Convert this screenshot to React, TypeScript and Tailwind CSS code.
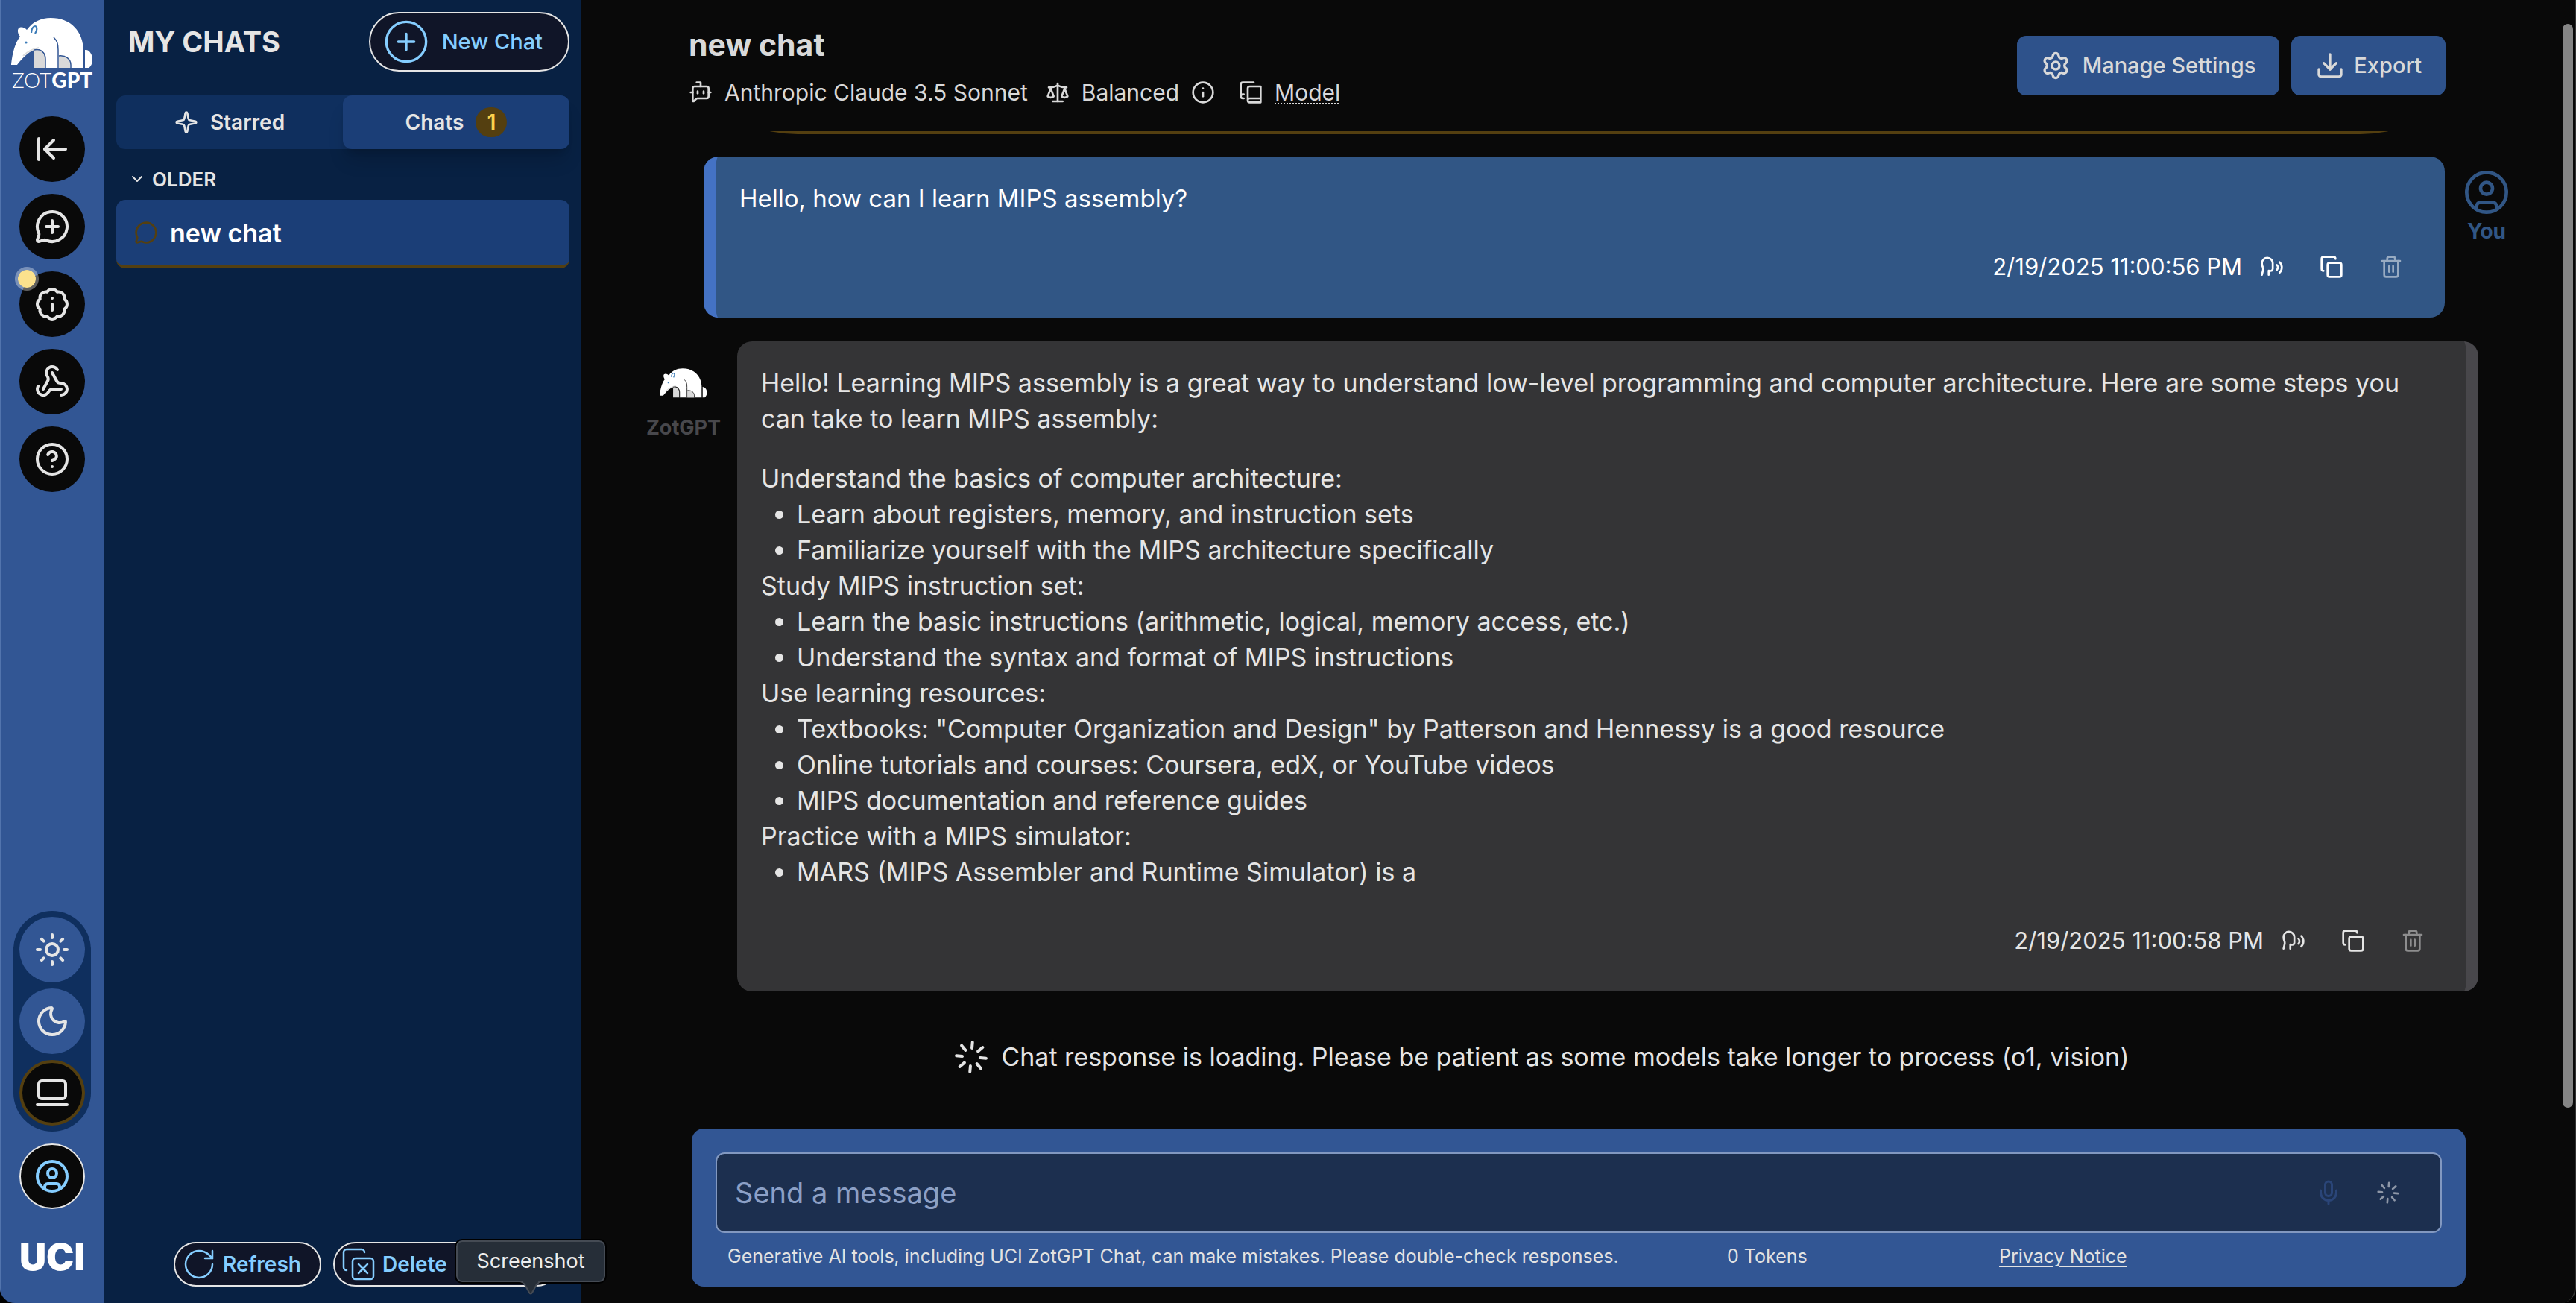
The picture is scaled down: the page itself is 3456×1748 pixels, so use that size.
import React from 'react';
import {
  ArrowLeftToLine,
  BadgeInfo,
  BotMessageSquare,
  ChevronDown,
  CircleHelp,
  CirclePlus,
  CircleUser,
  Copy,
  CopyX,
  Download,
  Info,
  LaptopMinimal,
  Loader,
  MessageCircle,
  MessageCirclePlus,
  Mic,
  Moon,
  RotateCw,
  Scale,
  Settings,
  Sparkle,
  Speech,
  Sun,
  Trash2,
  Webhook,
} from 'lucide-react';

function Anteater({ className, line }: { className: string; line: string }) {
  return (
    <svg viewBox="0 0 110 68" className={className} aria-hidden="true">
      <path d="M101 43c5 1 8 7 8 13 0 5-2 9-5 11h-5V43z" fill="#fff" />
      <path
        d="M0 62C2 46 5 34 12 25c-3-3-4-9-2-11 3-3 8-1 11 2C29 5 40 0 53 0c27 0 44 18 44 45v22H46V55c0-8-5-14-12-13C24 44 15 54 8 63H0z"
        fill="#fff"
      />
      <path d="M31 43c9-2 14 4 14 12v12H31z" fill="#d9d9d9" />
      <path d="M64 51c9-1 15 4 15 12v4H64z" fill="#d9d9d9" />
      <path d="M16 51c6-6 12-9 21-11" fill="none" stroke="#dcdcdc" strokeWidth="2" />
      <path
        d="M57 26c5 5 6 9 6 17v24M64 51c9-1 16 4 16 12v4M31 43c9-2 15 4 15 12v12M98 44v23"
        fill="none"
        stroke={line}
        strokeWidth="1.5"
      />
      <path d="M27 20c0-6 3-9 5-9s4 4 0 10" fill="none" stroke="#3c7cb8" strokeWidth="2.2" />
      <circle cx="20" cy="33" r="1.6" fill="#3c7cb8" />
    </svg>
  );
}

function BookStack({ className }: { className: string }) {
  return (
    <svg
      viewBox="0 0 24 24"
      className={className}
      fill="none"
      stroke="currentColor"
      strokeWidth="2"
      strokeLinecap="round"
      strokeLinejoin="round"
      aria-hidden="true"
    >
      <path d="M2 16V4a2 2 0 0 1 2-2h11" />
      <path d="M5 14H4a2 2 0 1 0 0 4h1" />
      <path d="M22 18H11a2 2 0 1 0 0 4h11V6H11a2 2 0 0 0-2 2v12" />
    </svg>
  );
}

const railItems = [
  { label: 'Collapse menu', Icon: ArrowLeftToLine, dot: false },
  { label: 'Start a new chat', Icon: MessageCirclePlus, dot: false },
  { label: 'What is new', Icon: BadgeInfo, dot: true },
  { label: 'Integrations', Icon: Webhook, dot: false },
  { label: 'Help', Icon: CircleHelp, dot: false },
];

function Rail() {
  return (
    <nav className="flex w-[140px] shrink-0 flex-col items-center border-l-2 border-[#5274ad] bg-[#325694] pr-0.5 text-[#e5e5e5]">
      <a href="#home" className="mt-6 flex flex-col items-center text-white" aria-label="ZotGPT home">
        <Anteater className="h-[68px] w-[110px]" line="#325694" />
        <span className="font-[Lato] text-[28px] leading-[30px] font-light">
          ZOT<span className="font-black">GPT</span>
        </span>
      </a>
      <div className="mt-[34px] flex flex-col gap-4">
        {railItems.map(({ label, Icon, dot }) => (
          <button
            key={label}
            type="button"
            aria-label={label}
            className="relative flex size-[88px] items-center justify-center rounded-full bg-[#090909]"
          >
            <Icon className="size-12" />
            {dot && (
              <span className="absolute -top-1.5 -left-1.5 size-8 rounded-full border-4 border-white/35 bg-[#fbe18d] bg-clip-padding" />
            )}
          </button>
        ))}
      </div>
      <div className="mt-auto flex flex-col gap-2 rounded-full bg-[#0f2f5e] p-2">
        <button type="button" aria-label="Light theme" className="flex size-[88px] items-center justify-center rounded-full bg-[#325694]">
          <Sun className="size-12" />
        </button>
        <button type="button" aria-label="Dark theme" className="flex size-[88px] items-center justify-center rounded-full bg-[#325694]">
          <Moon className="size-12" />
        </button>
        <button
          type="button"
          aria-label="System theme"
          className="flex size-[88px] items-center justify-center rounded-full border-4 border-[#543f10] bg-[#090909]"
        >
          <LaptopMinimal className="size-12" />
        </button>
      </div>
      <button
        type="button"
        aria-label="Account"
        className="mt-4 flex size-[88px] items-center justify-center rounded-full border-2 border-[#e5e5e5] bg-[#090909] text-[#85cdff]"
      >
        <CircleUser className="size-12" />
      </button>
      <span className="mt-[38px] mb-9 font-[Inter] text-[50px] leading-[52px] font-black text-white">UCI</span>
    </nav>
  );
}

function ChatPanel() {
  return (
    <aside className="flex w-[640px] shrink-0 flex-col bg-[#082143] px-4 pt-4 pb-[22px] text-[#e5e5e5]">
      <div className="flex h-20 items-center justify-between pl-4">
        <h1 className="text-[38px] leading-[48px] font-bold">MY CHATS</h1>
        <button
          type="button"
          className="flex h-20 items-center gap-4 rounded-full border-2 border-[#e5e5e5] bg-[#101528] pr-[34px] pl-4 text-[29px] font-medium text-[#85cdff]"
        >
          <CirclePlus className="size-16" strokeWidth={1.25} />
          New Chat
        </button>
      </div>
      <div role="tablist" className="mt-8 grid h-[72px] grid-cols-2 rounded-xl bg-[#0f2f5e] text-[28px] font-semibold">
        <button type="button" role="tab" aria-selected="false" className="flex items-center justify-center gap-4">
          <Sparkle className="size-8" />
          Starred
        </button>
        <button
          type="button"
          role="tab"
          aria-selected="true"
          className="flex items-center justify-center gap-4 rounded-xl bg-[#1b3e77] shadow-xl shadow-black/15"
        >
          Chats
          <span className="flex h-10 w-[42px] items-center justify-center rounded-full bg-[#543f10] text-[#fcd34d]">1</span>
        </button>
      </div>
      <section>
        <button type="button" className="mt-5 flex h-10 items-center gap-2 pl-4 text-[26px] font-semibold">
          <ChevronDown className="size-6" />
          OLDER
        </button>
        <a
          href="#chat"
          className="mt-2 flex h-[92px] items-center gap-4 rounded-xl border-b-4 border-[#543f10] bg-[#1b3e77] px-6 text-[34px] font-semibold text-white"
        >
          <MessageCircle className="size-8 text-[#543f10]" />
          new chat
        </a>
      </section>
      <div className="mt-auto flex gap-4 pl-[77px] text-[28px] font-semibold text-[#85cdff]">
        <button type="button" className="flex h-[60px] w-[198px] items-center gap-2 rounded-full border-2 border-[#e5e5e5] bg-[#101528] pl-2">
          <RotateCw className="size-12" strokeWidth={1.25} />
          Refresh
        </button>
        <div className="relative">
          <button type="button" className="flex h-[60px] w-[303px] items-center gap-2 rounded-full border-2 border-[#e5e5e5] bg-[#101528] pl-2">
            <CopyX className="size-12" strokeWidth={1.25} />
            Delete
          </button>
          <div
            role="tooltip"
            className="absolute -top-0.5 left-[165px] z-10 flex h-14 w-[200px] items-center justify-center rounded-lg border-2 border-[#454b54] bg-[#262e38] text-[27px] font-normal text-[#eeeeee] outline-2 outline-black"
          >
            Screenshot
            <svg viewBox="0 0 32 20" className="absolute top-[51px] left-[82px] h-5 w-8" aria-hidden="true">
              <path d="M0 0c6 0 7 4 9 8l5 9c1 2 3 2 4 0l5-9c2-4 3-8 9-8z" fill="#262e38" />
              <path d="M0 2c5 0 7 2 9 6l5 9c1 2 3 2 4 0l5-9c2-4 4-6 9-6" fill="none" stroke="#454b54" strokeWidth="2" />
            </svg>
          </div>
        </div>
      </div>
    </aside>
  );
}

function ChatHeader() {
  return (
    <header className="relative mr-[109px] ml-[110px] flex h-[180px] items-start justify-between pr-[66px] pl-[34px] text-[#d9d9d9]">
      <div className="pointer-events-none absolute inset-0 flex items-end overflow-hidden rounded-b-[180px]" aria-hidden="true">
        <div className="h-1 flex-1 bg-[#543f10]" />
      </div>
      <div>
        <h2 className="mt-9 text-[41px] leading-[48px] font-bold">new chat</h2>
        <div className="mt-4 flex h-12 items-center text-[30px]">
          <BotMessageSquare className="mr-4 size-8" />
          Anthropic Claude 3.5 Sonnet
          <Scale className="mr-4 ml-6 size-8" />
          Balanced
          <button type="button" aria-label="About this style" className="mr-8 ml-4">
            <Info className="size-8" />
          </button>
          <BookStack className="mr-4 size-8" />
          <a href="#model" className="underline decoration-dotted decoration-2 underline-offset-4">
            Model
          </a>
        </div>
      </div>
      <div className="mt-12 flex gap-4 text-[29px] font-medium">
        <button type="button" className="flex h-20 items-center gap-4 rounded-xl bg-[#2e528b] px-8">
          <Settings className="size-10" />
          Manage Settings
        </button>
        <button type="button" className="flex h-20 items-center gap-3 rounded-xl bg-[#2e528b] px-8">
          <Download className="size-10" />
          Export
        </button>
      </div>
    </header>
  );
}

function MessageFooter({ time }: { time: string }) {
  return (
    <div className="mt-8 flex h-[72px] items-center justify-end pr-6">
      <time className="text-[31px]">{time}</time>
      <button type="button" aria-label="Read aloud" className="ml-6">
        <Speech className="size-8" />
      </button>
      <button type="button" aria-label="Copy message" className="ml-12">
        <Copy className="size-8" />
      </button>
      <button type="button" aria-label="Delete message" className="ml-12 opacity-50">
        <Trash2 className="size-8" />
      </button>
    </div>
  );
}

const steps = [
  {
    title: 'Understand the basics of computer architecture:',
    points: ['Learn about registers, memory, and instruction sets', 'Familiarize yourself with the MIPS architecture specifically'],
  },
  {
    title: 'Study MIPS instruction set:',
    points: [
      'Learn the basic instructions (arithmetic, logical, memory access, etc.)',
      'Understand the syntax and format of MIPS instructions',
    ],
  },
  {
    title: 'Use learning resources:',
    points: [
      'Textbooks: "Computer Organization and Design" by Patterson and Hennessy is a good resource',
      'Online tutorials and courses: Coursera, edX, or YouTube videos',
      'MIPS documentation and reference guides',
    ],
  },
  { title: 'Practice with a MIPS simulator:', points: ['MARS (MIPS Assembler and Runtime Simulator) is a'] },
];

function Conversation() {
  return (
    <div className="flex flex-col gap-8 pt-[30px] text-[34px] leading-[48px]">
      <article className="mr-16 ml-[164px] flex">
        <div className="flex-1 rounded-[20px] border-l-[16px] border-[#4472c4] bg-[#315685] p-8 text-white">
          <p className="text-[33px]">Hello, how can I learn MIPS assembly?</p>
          <MessageFooter time="2/19/2025 11:00:56 PM" />
        </div>
        <div className="flex w-28 flex-col items-center pt-4 text-[28px] leading-10 font-bold text-[#315685]">
          <CircleUser className="size-16" strokeWidth={1.75} />
          You
        </div>
      </article>
      <article className="mr-[131px] ml-[65px] flex">
        <div className="flex w-36 flex-col items-center pt-9 text-[27px] leading-10 font-bold text-[#48484c]">
          <Anteater className="mb-5 h-10 w-16" line="#222222" />
          ZotGPT
        </div>
        <div className="flex-1 rounded-[20px] border-r-[16px] border-[#48474b] bg-[#343436] p-8 text-[#e5e5e5]">
          <p>
            Hello! Learning MIPS assembly is a great way to understand low-level programming and computer architecture. Here are
            some steps you can take to learn MIPS assembly:
          </p>
          <div className="mt-8">
            {steps.map((step) => (
              <section key={step.title}>
                <p>{step.title}</p>
                <ul className="list-disc pl-12">
                  {step.points.map((point) => (
                    <li key={point}>{point}</li>
                  ))}
                </ul>
              </section>
            ))}
          </div>
          <MessageFooter time="2/19/2025 11:00:58 PM" />
        </div>
      </article>
    </div>
  );
}

function Composer() {
  return (
    <form className="mx-[148px] mt-auto mb-[22px] rounded-2xl bg-[#325694] px-8 pt-8 pb-4">
      <div className="flex h-[108px] items-center rounded-xl border-2 border-[#8298c0] bg-[#1c2f4f] pr-[54px] pl-6">
        <input
          type="text"
          aria-label="Send a message"
          placeholder="Send a message"
          className="min-w-0 flex-1 bg-transparent text-[38px] text-white outline-none placeholder:text-[#8ca0c6]"
        />
        <button type="button" aria-label="Dictate" className="text-[#2a4578]">
          <Mic className="size-9" />
        </button>
        <button type="submit" aria-label="Sending" className="ml-[46px] text-[#8e97a7]">
          <Loader className="size-8 rotate-5" />
        </button>
      </div>
      <div className="grid h-14 grid-cols-[1341fr_365fr_594fr] items-center pt-2 pl-4 text-[25px] text-[#e2e2e2]">
        <p>Generative AI tools, including UCI ZotGPT Chat, can make mistakes. Please double-check responses.</p>
        <p>0 Tokens</p>
        <a href="#privacy" className="justify-self-start underline underline-offset-4">
          Privacy Notice
        </a>
      </div>
    </form>
  );
}

export default function App() {
  return (
    <div className="bg-black font-['Inter',sans-serif]">
      <div className="flex h-screen overflow-hidden rounded-b-[20px]">
        <Rail />
        <ChatPanel />
        <main className="relative flex min-w-0 flex-1 flex-col bg-[#090909]">
          <ChatHeader />
          <Conversation />
          <p className="mt-16 flex items-center justify-center gap-4 pr-[100px] text-[34px] leading-[48px] text-[#e5e5e5]">
            <Loader className="size-12 rotate-5" />
            Chat response is loading. Please be patient as some models take longer to process (o1, vision)
          </p>
          <Composer />
          <div className="pointer-events-none absolute inset-0 rounded-br-[20px] border-r-2 border-[#333333]" aria-hidden="true" />
          <div className="absolute top-8 right-1 h-[1454px] w-3.5 rounded-full bg-[#858585]" aria-hidden="true" />
        </main>
      </div>
    </div>
  );
}
